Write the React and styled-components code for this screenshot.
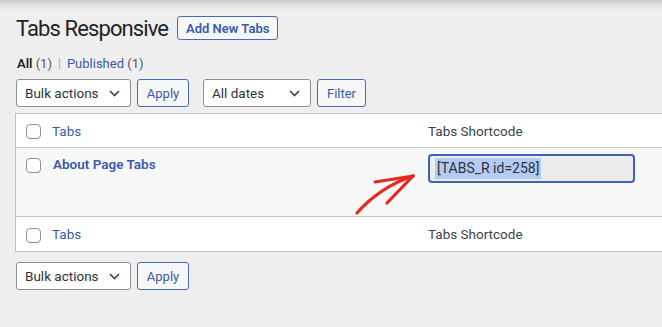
import React from "react";
import styled, { createGlobalStyle } from "styled-components";

const Global = createGlobalStyle`
  html, body { margin: 0; padding: 0; }
  body {
    background: #efefef;
    font-family: Roboto, "Liberation Sans", Arial, sans-serif;
    color: #1d2327;
    overflow: hidden;
    width: 662px;
    height: 327px;
  }
`;

const Page = styled.div`
  position: relative;
  width: 662px;
  height: 327px;
  padding: 16px 0 0 15px;
  box-sizing: border-box;
  background: linear-gradient(#c9c9c9 0px, #e3e3e3 5px, #efefef 12px, #efefef 100%);
`;

const TitleRow = styled.div`
  display: flex;
  align-items: center;
  height: 24px;
  gap: 9px;
  padding-left: 1px;
`;

const Title = styled.h1`
  margin: 0;
  font-size: 22px;
  font-weight: 400;
  line-height: 24px;
  letter-spacing: -0.9px;
  color: #1d2327;
  position: relative;
  top: 1px;
`;

const OutlineButton = styled.button`
  box-sizing: border-box;
  height: ${(p) => p.$h || 28}px;
  padding: 0 ${(p) => p.$px || 10}px;
  border: 1px solid #4a6ab4;
  border-radius: 3px;
  background: #f6f7f7;
  color: #3a5ba9;
  font-family: inherit;
  font-size: 13px;
  font-weight: ${(p) => (p.$bold ? 600 : 400)};
  display: inline-flex;
  align-items: center;
  justify-content: center;
  width: ${(p) => p.$w}px;
`;

const Views = styled.div`
  margin-top: 15px;
  padding-left: 2px;
  height: 16px;
  display: flex;
  align-items: center;
  font-size: 13px;
  color: #50575e;
`;

const Current = styled.span`
  font-weight: 600;
  color: #1d2327;
`;

const Sep = styled.span`
  color: #a7aaad;
  margin: 0 6px;
  font-size: 12px;
`;

const Link = styled.span`
  color: #3a5ba9;
`;

const Nav = styled.div`
  display: flex;
  align-items: center;
  height: 28px;
  margin-top: ${(p) => p.$mt}px;
  padding-left: 1px;
`;

const Select = styled.div`
  box-sizing: border-box;
  width: ${(p) => p.$w}px;
  height: 28px;
  border: 1px solid #8c8f94;
  border-radius: 3px;
  background: #fff;
  display: flex;
  align-items: center;
  justify-content: space-between;
  padding: 0 10px 0 8px;
  font-size: 13.5px;
  color: #2c3338;
  margin-right: ${(p) => p.$mr}px;
`;

const Table = styled.div`
  margin-top: 6px;
  width: 647px;
  box-sizing: border-box;
  background: #fff;
  border: 1px solid #c3c4c7;
  border-right: none;
`;

const Row = styled.div`
  position: relative;
  display: grid;
  grid-template-columns: 36px 376px 1fr;
  height: ${(p) => p.$h}px;
  background: ${(p) => p.$bg || "#fff"};
  border-top: ${(p) => (p.$border ? "1px solid #c3c4c7" : "none")};
  align-items: start;
`;

const Cell = styled.div`
  padding-top: ${(p) => p.$pt}px;
  font-size: 13.5px;
  line-height: 18px;
  color: ${(p) => p.$color || "#3c434a"};
  font-weight: ${(p) => p.$weight || 400};
  padding-left: ${(p) => p.$pl || 0}px;
`;

const CheckCell = styled.div`
  padding-top: ${(p) => p.$pt}px;
  padding-left: 10px;
`;

const Checkbox = styled.div`
  box-sizing: border-box;
  width: 15px;
  height: 15px;
  border: 1px solid #8c8f94;
  border-radius: 4px;
  background: #fff;
`;

const ShortInput = styled.div`
  box-sizing: border-box;
  width: 207px;
  height: 29px;
  margin-top: 6px;
  border: 2px solid #3e63b0;
  border-radius: 4px;
  background: #ececec;
  display: flex;
  align-items: center;
  padding-left: 5px;
`;

const Selected = styled.span`
  background: #b4cbf5;
  color: #2c3338;
  font-size: 14px;
  line-height: 21px;
  padding: 0 2px 0 2px;
`;

const Arrow = styled.svg`
  position: absolute;
  left: 334px;
  top: 22px;
  overflow: visible;
`;

const Chevron = () => (
  <svg width="11" height="7" viewBox="0 0 11 7">
    <path d="M1 1l4.5 4.5L10 1" fill="none" stroke="#3c434a" strokeWidth="1.6" />
  </svg>
);

export default function App() {
  return (
    <>
      <Global />
      <Page>
        <TitleRow>
          <Title>Tabs Responsive</Title>
          <OutlineButton $h={24} $px={8} $bold>Add New Tabs</OutlineButton>
        </TitleRow>
        <Views>
          <Current>All</Current>&nbsp;(1)<Sep>|</Sep>
          <Link>Published</Link>&nbsp;(1)
        </Views>
        <Nav $mt={8}>
          <Select $w={115} $mr={6}>
            Bulk actions <Chevron />
          </Select>
          <OutlineButton $w={52}>Apply</OutlineButton>
          <span style={{ width: 14 }} />
          <Select $w={108} $mr={6}>
            All dates <Chevron />
          </Select>
          <OutlineButton $w={49}>Filter</OutlineButton>
        </Nav>
        <Table>
          <Row $h={33}>
            <CheckCell $pt={10}><Checkbox /></CheckCell>
            <Cell $pt={8} $color="#3a5ba9">Tabs</Cell>
            <Cell $pt={8}>Tabs Shortcode</Cell>
          </Row>
          <Row $h={68} $bg="#f6f7f7" $border>
            <CheckCell $pt={10}><Checkbox /></CheckCell>
            <Cell $pt={7} $pl={1} $color="#3a5ba9" $weight={600}>About Page Tabs</Cell>
            <div>
              <ShortInput>
                <Selected>[TABS_R id=258]</Selected>
              </ShortInput>
            </div>
            <Arrow width="70" height="50" viewBox="0 0 70 50">
              <g fill="none" stroke="#e8281e" strokeWidth="3.2" strokeLinecap="round">
                <path d="M7 43 Q 30 17 63 6" />
                <path d="M25 12 L63 6" />
                <path d="M37 33 L63 6" />
              </g>
            </Arrow>
          </Row>
          <Row $h={34} $border>
            <CheckCell $pt={11}><Checkbox /></CheckCell>
            <Cell $pt={8} $color="#3a5ba9">Tabs</Cell>
            <Cell $pt={8}>Tabs Shortcode</Cell>
          </Row>
        </Table>
        <Nav $mt={10}>
          <Select $w={115} $mr={6}>
            Bulk actions <Chevron />
          </Select>
          <OutlineButton $w={52}>Apply</OutlineButton>
        </Nav>
      </Page>
    </>
  );
}
